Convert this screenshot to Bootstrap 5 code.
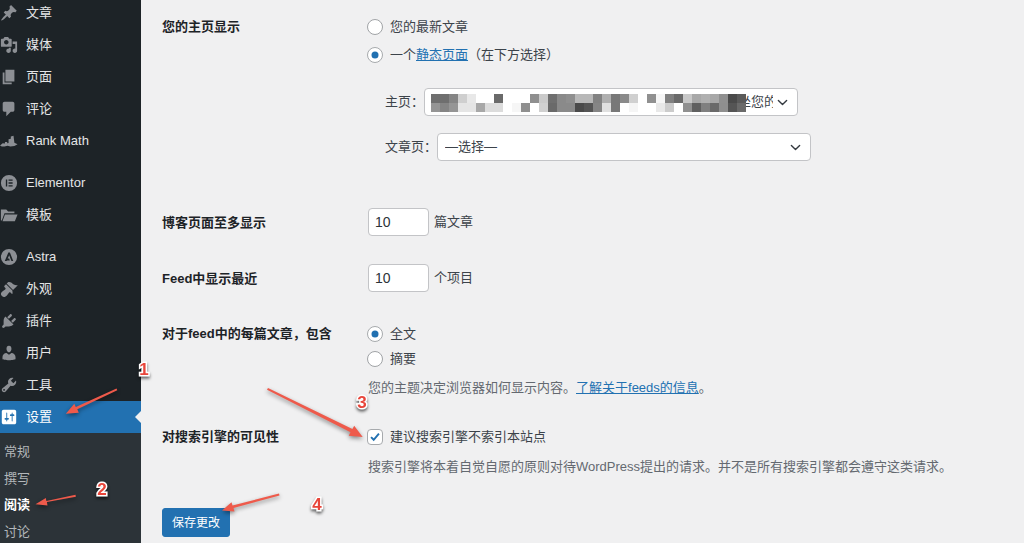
<!DOCTYPE html>
<html lang="zh-CN">
<head>
    <meta charset="UTF-8">
    <meta name="viewport" content="width=device-width, initial-scale=1">
    <title>阅读设置</title>
    <link href="https://cdn.jsdelivr.net/npm/bootstrap@5.3.2/dist/css/bootstrap.min.css" rel="stylesheet">
    <script src="https://cdn.jsdelivr.net/npm/bootstrap@5.3.2/dist/js/bootstrap.bundle.min.js"></script>
    <style>
        html, body { height: 543px; overflow: hidden; }
        body {
            font-family: "Liberation Sans", "Noto Sans CJK SC", sans-serif;
            font-size: 13px;
            line-height: 20px;
            color: #3c434a;
            background: #f0f0f1;
        }
        .wp-shell { height: 543px; position: relative; }

        /* sidebar */
        .wp-side { width: 141px; background: #1d2327; flex: none; height: 543px; overflow: hidden; }
        .side-list { margin-top: -3px; }
        .side-item { height: 32px; color: #e4e5e6; gap: 8px; position: relative; }
        .side-item svg { width: 18px; height: 18px; fill: #8c8f94; flex: none; }
        .side-gap { margin-top: 10px; }
        .side-item.is-current { background: #2271b1; color: #fff; }
        .side-item.is-current svg { fill: #fff; }
        .side-item.is-current::after {
            content: "";
            position: absolute;
            right: 0;
            top: 10px;
            border: 6px solid transparent;
            border-right-color: #f0f0f1;
            border-left-width: 0;
        }
        .side-sub { background: #2c3338; padding-top: 6px; padding-left: 4px; height: 200px; }
        .side-sub div { height: 26.6px; line-height: 26.6px; color: #b3b7ba; }
        .side-sub .is-on { color: #fff; font-weight: 700; }

        /* form */
        .wp-main { padding: 17px 0 0 21px; }
        .opt-label { width: 206px; flex: none; font-weight: 700; color: #1d2327; }
        .opt-mid { align-items: center; }
        .opt-mid .opt-label { padding-top: 2px; }
        .opt-check { padding: 0; margin-bottom: 0; min-height: 20px; display: flex; align-items: center; gap: 7px; margin-left: -1px; }
        .opt-check .form-check-input {
            float: none;
            margin: 0;
            width: 16px;
            height: 16px;
            border-color: #a0a3a6;
            background-color: #fff;
            flex: none;
        }
        .opt-check .form-check-input[type=radio]:checked {
            background-color: #fff;
            border-color: #a7aaad;
            --bs-form-check-bg-image: url("data:image/svg+xml,%3csvg xmlns='http://www.w3.org/2000/svg' viewBox='-4 -4 8 8'%3e%3ccircle r='2' fill='%232271b1'/%3e%3c/svg%3e");
        }
        .opt-check .form-check-input[type=checkbox] { border-radius: 4px; }
        .opt-check .form-check-input[type=checkbox]:checked {
            background-color: #fff;
            border-color: #a7aaad;
            --bs-form-check-bg-image: url("data:image/svg+xml,%3csvg xmlns='http://www.w3.org/2000/svg' viewBox='0 0 16 16'%3e%3cpath fill='none' stroke='%232271b1' stroke-width='2.2' d='M3.5 8.2l3 3 6-7'/%3e%3c/svg%3e");
        }
        .mt-row2 { margin-top: 47px; }
        .mt-row3 { margin-top: 28px; }
        .mt-row4 { margin-top: 32px; }
        .mt-row5 { margin-top: 29px; }
        .mt-save { margin-top: 31px; }
        .gap-radio { margin-top: 8px; }
        .gap-radio2 { margin-top: 5px; }
        .gap-help { margin-top: 9px; }
        .gap-help2 { margin-top: 10px; }
        .gap-sub1 { margin-top: 23px; }
        .gap-sub2 { margin-top: 17px; }
        .wp-link { color: #2271b1; }
        .wp-help { color: #646970; }
        .sub-label { margin-left: 17px; width: 39px; white-space: nowrap; }
        .sub-label-wide { width: 52px; }
        .wp-select.form-select {
            width: 374px;
            height: 28px;
            min-height: 28px;
            font-size: 13px;
            line-height: 20px;
            color: #3c434a;
            padding: 0 24px 0 7px;
            border-color: #c3c4c7;
            border-radius: 4px;
            background-position: right 7px center;
            background-size: 15px 11px;
        }
        .select-box { position: relative; }
        .select-box .wp-select.form-select { padding-left: 14px; }
        .select-mosaic { position: absolute; left: 7px; top: 6px; width: 315px; height: 18px; filter: blur(.5px); }
        .wp-num.form-control {
            width: 61px;
            height: 28px;
            min-height: 28px;
            padding: 0 6px;
            font-size: 14px;
            color: #2c3338;
            border-color: #c3c4c7;
            border-radius: 4px;
        }
        .num-row { gap: 5px; }
        .wp-save.btn {
            --bs-btn-bg: #2271b1;
            --bs-btn-border-color: #2271b1;
            --bs-btn-font-size: 12px;
            --bs-btn-line-height: 20px;
            --bs-btn-padding-x: 0;
            --bs-btn-padding-y: 3.5px;
            --bs-btn-border-radius: 3px;
            font-weight: 400;
            width: 68px;
            white-space: nowrap;
        }

        /* screenshot notes drawn on top */
        .note-layer { position: absolute; left: 0; top: 0; width: 1024px; height: 543px; pointer-events: none; }
        .note-arrow { fill: #ee5a4b; filter: drop-shadow(0 2px 2px rgba(0,0,0,.45)); }
        .note-num {
            font: 700 17px "Liberation Sans", sans-serif;
            fill: #e8453a;
            stroke: #fff;
            stroke-width: 3px;
            paint-order: stroke;
            text-anchor: middle;
            filter: drop-shadow(0 2px 1.5px rgba(0,0,0,.6));
        }
    </style>
</head>
<body>
<div class="wp-shell d-flex">

    <div class="wp-side">
        <div class="side-list">
            <div class="side-item d-flex align-items-center"><svg viewBox="0 0 20 20"><path d="M10.44 3.02l1.82-1.82 6.36 6.35-1.83 1.82c-1.05-.68-2.48-.57-3.41.36l-.75.75c-.92.93-1.04 2.35-.35 3.41l-1.83 1.82-2.41-2.41-2.8 2.79c-.42.42-3.38 2.71-3.8 2.29s1.86-3.39 2.28-3.81l2.79-2.79L4.1 9.36l1.83-1.82c1.05.69 2.48.57 3.4-.36l.75-.75c.93-.92 1.05-2.35.36-3.41z"/></svg>文章</div>
            <div class="side-item d-flex align-items-center"><svg viewBox="0 0 20 20"><path d="M13 11V4c0-.55-.45-1-1-1h-1.67L9 1H5L3.67 3H2c-.55 0-1 .45-1 1v7c0 .55.45 1 1 1h10c.55 0 1-.45 1-1zM7 4.5c1.38 0 2.5 1.12 2.5 2.5S8.38 9.5 7 9.5 4.5 8.38 4.5 7 5.62 4.5 7 4.5zM14 6h5v10.5c0 1.38-1.12 2.5-2.5 2.5S14 17.88 14 16.5s1.12-2.5 2.5-2.5c.17 0 .34.02.5.05V9h-3V6zm-4 8.05V13h2v3.5c0 1.38-1.12 2.5-2.5 2.5S7 17.88 7 16.5 8.12 14 9.5 14c.17 0 .34.02.5.05z"/></svg>媒体</div>
            <div class="side-item d-flex align-items-center"><svg viewBox="0 0 20 20"><path d="M6 15V2h10v13H6zm-1 1h8v2H3V5h2v11z"/></svg>页面</div>
            <div class="side-item d-flex align-items-center"><svg viewBox="0 0 20 20"><path d="M5 2h9c1.1 0 2 .9 2 2v7c0 1.1-.9 2-2 2h-2l-5 5v-5H5c-1.1 0-2-.9-2-2V4c0-1.1.9-2 2-2z"/></svg>评论</div>
            <div class="side-item d-flex align-items-center"><svg viewBox="0 0 20 20"><path d="M0 15l3-2.500 2.500.3V11H8v1.500l1.500-.3V8l2.500-.5V5l3-.7 1 7.700 3.500 1.500-3.500 2-4.500.500-3-.8-3.500.8H2z"/></svg>Rank Math</div>
            <div class="side-item side-gap d-flex align-items-center"><svg viewBox="0 0 20 20"><path fill-rule="evenodd" d="M10 1a9 9 0 1 0 0 18 9 9 0 0 0 0-18zM6.500 6h1.500v8H6.500zM9.500 6h4.500v1.500H9.500zM9.500 9.250h4.500v1.500H9.500zM9.500 12.500h4.500V14H9.500z"/></svg>Elementor</div>
            <div class="side-item d-flex align-items-center"><svg viewBox="0 0 20 20"><path d="M1 4h6l2 2h7v2H5l-3 8H1zM5.500 9.500H19.500L16.500 17H2.800z"/></svg>模板</div>
            <div class="side-item side-gap d-flex align-items-center"><svg viewBox="0 0 20 20"><path fill-rule="evenodd" d="M10 1a9 9 0 1 0 0 18 9 9 0 0 0 0-18zM9.300 5h1.700l3.700 9.500h-2L10.200 8l-1.700 3.800 1.700 0 .7 2H7.700l-.3.700H5.300z"/></svg>Astra</div>
            <div class="side-item d-flex align-items-center"><svg viewBox="0 0 20 20"><path d="M14.480 11.060L7.410 3.990l1.500-1.500c.5-.56 2.300-.47 3.510.32 1.210.8 1.430 1.280 2.910 2.100 1.180.64 2.450 1.260 4.450.85zm-.71.71L6.700 4.700 4.930 6.470c-.39.39-.39 1.020 0 1.410l1.060 1.060c.39.39.39 1.030 0 1.420-.6.6-1.430 1.110-2.210 1.690-.35.26-.7.53-1.010.84C1.430 13.710 0 15.700 2.150 17.850s4.140.72 5.490-.63c.31-.31.58-.66.84-1.010.58-.78 1.090-1.610 1.690-2.210.39-.39 1.030-.39 1.420 0l1.060 1.060c.39.39 1.020.39 1.410 0z"/></svg>外观</div>
            <div class="side-item d-flex align-items-center"><svg viewBox="0 0 20 20"><path d="M13.110 4.360L9.870 7.600 8 5.730l3.240-3.240c.35-.34 1.050-.2 1.560.32.520.51.660 1.210.31 1.550zm-8 1.770l.91-1.120 9.010 9.010-1.190.84c-.71.71-2.630 1.160-3.820 1.160H6.140L4.900 17.260c-.59.59-1.540.59-2.120 0-.59-.58-.59-1.530 0-2.120l1.240-1.240v-3.880c0-1.130.4-3.190 1.090-3.890zm7.260 3.970l3.240-3.240c.34-.35 1.040-.21 1.550.31.520.51.660 1.210.31 1.550l-3.240 3.250z"/></svg>插件</div>
            <div class="side-item d-flex align-items-center"><svg viewBox="0 0 20 20"><path d="M10 9.250c-2.270 0-2.730-3.440-2.730-3.440C7 4.020 7.820 2 9.970 2c2.160 0 2.980 2.020 2.710 3.810 0 0-.41 3.440-2.680 3.440zm0 2.570L12.720 10c2.390 0 4.520 2.330 4.520 4.530v2.490s-3.650 1.130-7.240 1.130c-3.650 0-7.240-1.130-7.240-1.130v-2.490c0-2.250 1.940-4.480 4.470-4.480z"/></svg>用户</div>
            <div class="side-item d-flex align-items-center"><svg viewBox="0 0 20 20"><path d="M16.680 9.770c-1.340 1.340-3.300 1.670-4.950.99l-5.410 6.520c-.99.99-2.590.99-3.580 0s-.99-2.590 0-3.570l6.520-5.420c-.68-1.650-.35-3.610.99-4.950 1.280-1.280 3.120-1.620 4.720-1.060l-2.890 2.890 2.820 2.820 2.860-2.870c.53 1.580.18 3.390-1.080 4.650zM3.810 16.210c.4.39 1.040.39 1.430 0 .4-.4.4-1.040 0-1.430-.39-.4-1.030-.4-1.430 0-.39.39-.39 1.030 0 1.430z"/></svg>工具</div>
            <div class="side-item is-current d-flex align-items-center"><svg viewBox="0 0 20 20"><path d="M18 16V4c0-1.100-.9-2-2-2H4c-1.100 0-2 .9-2 2v12c0 1.100.9 2 2 2h12c1.100 0 2-.9 2-2zM8 11h1c.55 0 1 .45 1 1s-.45 1-1 1H8v1.500c0 .28-.22.5-.5.5s-.5-.22-.5-.5V13H6c-.55 0-1-.45-1-1s.45-1 1-1h1V5.500c0-.28.22-.5.5-.5s.5.22.5.5V11zm5-2h-1c-.55 0-1-.45-1-1s.45-1 1-1h1V5.500c0-.28.22-.5.5-.5s.5.22.5.5V7h1c.55 0 1 .45 1 1s-.45 1-1 1h-1v5.500c0 .28-.22.5-.5.5s-.5-.22-.5-.5V9z"/></svg>设置</div>
            <div class="side-sub">
                <div>常规</div>
                <div>撰写</div>
                <div class="is-on">阅读</div>
                <div>讨论</div>
            </div>
        </div>
    </div>

    <div class="wp-main flex-grow-1">
        <div class="d-flex">
            <div class="opt-label">您的主页显示</div>
            <div>
                <div class="form-check opt-check"><input class="form-check-input" type="radio" name="front"><label>您的最新文章</label></div>
                <div class="form-check opt-check gap-radio"><input class="form-check-input" type="radio" name="front" checked><label>一个<a href="#" class="wp-link">静态页面</a>（在下方选择）</label></div>
                <div class="d-flex align-items-center gap-sub1">
                    <div class="sub-label">主页：</div>
                    <div class="select-box">
                        <select class="form-select wp-select"><option>这是一个被打码遮住的页面标题这是一个被打码遮住坐您的页面</option></select>
                        <svg class="select-mosaic" id="mosaic" viewBox="0 0 315 18"></svg>
                    </div>
                </div>
                <div class="d-flex align-items-center gap-sub2">
                    <div class="sub-label sub-label-wide">文章页：</div>
                    <select class="form-select wp-select"><option>—选择—</option></select>
                </div>
            </div>
        </div>

        <div class="d-flex opt-mid mt-row2">
            <div class="opt-label">博客页面至多显示</div>
            <div class="d-flex align-items-center num-row"><input class="form-control wp-num" type="text" value="10"><span>篇文章</span></div>
        </div>

        <div class="d-flex opt-mid mt-row3">
            <div class="opt-label">Feed中显示最近</div>
            <div class="d-flex align-items-center num-row"><input class="form-control wp-num" type="text" value="10"><span>个项目</span></div>
        </div>

        <div class="d-flex mt-row4">
            <div class="opt-label">对于feed中的每篇文章，包含</div>
            <div>
                <div class="form-check opt-check"><input class="form-check-input" type="radio" name="feed" checked><label>全文</label></div>
                <div class="form-check opt-check gap-radio2"><input class="form-check-input" type="radio" name="feed"><label>摘要</label></div>
                <div class="wp-help gap-help">您的主题决定浏览器如何显示内容。<a href="#" class="wp-link">了解关于feeds的信息</a>。</div>
            </div>
        </div>

        <div class="d-flex mt-row5">
            <div class="opt-label">对搜索引擎的可见性</div>
            <div>
                <div class="form-check opt-check"><input class="form-check-input" type="checkbox" checked><label>建议搜索引擎不索引本站点</label></div>
                <div class="wp-help gap-help2">搜索引擎将本着自觉自愿的原则对待WordPress提出的请求。并不是所有搜索引擎都会遵守这类请求。</div>
            </div>
        </div>

        <button type="button" class="btn btn-primary wp-save mt-save">保存更改</button>
    </div>

    <svg class="note-layer" viewBox="0 0 1024 543">
        <path class="note-arrow" d="M116.500 388.500l.8 1.800-40 19 1.500 3.500-13 1 8.500-10 1.500 3.200z"/>
        <path class="note-arrow" d="M75.500 494.800l.4 2-29 5.200.6 3.500-12-1.300 10.300-6.200.6 3.100z"/>
        <path class="note-arrow" d="M268 388l-1 1.800 83.500 42.500-1.800 3.500 14 1.200-8.500-11.200-1.800 3.300z"/>
        <path class="note-arrow" d="M279 493.500l.5 2-46 12.500 1 3.500-12.500-1 9.500-8.200 1 3.200z"/>
        <text class="note-num" x="144" y="375">1</text>
        <text class="note-num" x="102" y="495">2</text>
        <text class="note-num" x="362" y="408">3</text>
        <text class="note-num" x="317" y="510">4</text>
    </svg>
</div>

<script>
    // 打码的两行灰块，每格 9px
    let rows = [
        [0x6f,0x6f,0x85,0xcf,0xe8,0xff,0xff,0x6a,0xff,0xff,0xff,0x8f,0xca,0x6f,0x8a,0x8f,0xb8,0xb8,0x82,0xb0,0x78,0x8a,0xd0,0xff,0x90,0xf5,0x80,0x6a,0xc8,0xa8,0xb0,0xa8,0x90,0x4a,0x5a],
        [0x95,0x85,0x95,0xe5,0xe5,0xa8,0xdc,0xdc,0xff,0xf6,0x8f,0xff,0xd0,0x6a,0x8a,0x8a,0x4a,0x55,0x85,0xe0,0x78,0xff,0xf5,0xff,0xff,0xe8,0xcc,0xff,0x90,0x60,0x80,0x6a,0x8f,0x55,0x6a]
    ];
    let svg = document.getElementById("mosaic");
    let html = "";
    rows.forEach((row, y) => {
        row.forEach((v, x) => {
            html += `<rect x="${x * 9}" y="${y * 9}" width="9" height="9" fill="rgb(${v},${v},${v})"/>`;
        });
    });
    svg.innerHTML = html;
</script>
</body>
</html>
